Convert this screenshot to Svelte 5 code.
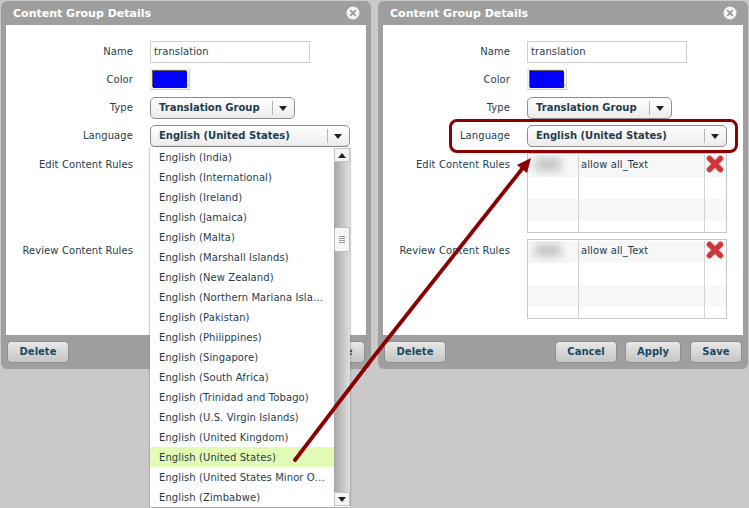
<script>
  const languages = [
    'English (India)', 'English (International)', 'English (Ireland)', 'English (Jamaica)',
    'English (Malta)', 'English (Marshall Islands)', 'English (New Zealand)',
    'English (Northern Mariana Islands)', 'English (Pakistan)', 'English (Philippines)',
    'English (Singapore)', 'English (South Africa)', 'English (Trinidad and Tobago)',
    'English (U.S. Virgin Islands)', 'English (United Kingdom)', 'English (United States)',
    'English (United States Minor Outlying Islands)', 'English (Zimbabwe)'
  ];
  const panels = [{ open: true }, { open: false }];
  const rules = ['Edit Content Rules', 'Review Content Rules'];
</script>

{#snippet closeIcon()}
  <svg class="close" width="14" height="14" viewBox="0 0 14 14">
    <circle cx="7" cy="7" r="6.5" fill="#f4f4f4" />
    <path d="M4.700 4.700l4.600 4.600M9.300 4.700l-4.600 4.600" stroke="#9c9c9c" stroke-width="1.800" stroke-linecap="round" />
  </svg>
{/snippet}

{#snippet select(label, cls)}
  <div class="select {cls}">
    <span class="select-label">{label}</span>
    <span class="select-arrow"><i class="tri"></i></span>
  </div>
{/snippet}

{#snippet ruleTable()}
  <div class="rule-table">
    {#each [0, 1, 2, 3] as i}
      <div class="rule-row" class:striped={i % 2 === 0} class:last={i === 3}>
        <div class="c1">
          {#if i === 0}<div class="blurred"></div>{/if}
        </div>
        <div class="c2">{i === 0 ? 'allow all_Text' : ''}</div>
        <div class="c3">
          {#if i === 0}
            <svg class="del" width="18" height="18" viewBox="0 0 18 18">
              <path d="M3.500 3.500L14.500 14.500M14.500 3.500L3.500 14.500" stroke="#c9b3b3" stroke-width="6.500" stroke-linecap="round" />
              <path d="M3.500 3.500L14.500 14.500M14.500 3.500L3.500 14.500" stroke="#d2343b" stroke-width="5" stroke-linecap="round" />
            </svg>
          {/if}
        </div>
      </div>
    {/each}
  </div>
{/snippet}

<div class="stage">
  {#each panels as panel}
    <section class="dialog">
      <header class="titlebar">
        <h2>Content Group Details</h2>
        {@render closeIcon()}
      </header>
      <div class="body">
        <div class="field first">
          <span class="label">Name</span>
          <input class="text" value="translation" readonly />
        </div>
        <div class="field colour">
          <span class="label">Color</span>
          <div class="swatch"><div class="blue"></div><i class="mini"></i></div>
        </div>
        <div class="field">
          <span class="label">Type</span>
          {@render select('Translation Group', 'type')}
        </div>
        <div class="field">
          <span class="label">Language</span>
          {@render select('English (United States)', 'lang')}
        </div>
        {#each rules as rule, r}
          <div class="field rule" class:second={r === 1}>
            <span class="label">{rule}</span>
            {#if !panel.open}{@render ruleTable()}{/if}
          </div>
        {/each}
      </div>
      <footer class="actions">
        <button>Delete</button>
        <span class="spacer"></span>
        <button class="cancel">Cancel</button>
        <button class="apply">Apply</button>
        <button class="save">Save</button>
      </footer>
    </section>
  {/each}

  <div class="dropdown">
    <ul>
      {#each languages as lang}
        <li class:active={lang === 'English (United States)'}>{lang}</li>
      {/each}
    </ul>
    <div class="scrollbar">
      <div class="sb-btn"><i class="tri up"></i></div>
      <div class="thumb"><i></i><i></i><i></i><i></i></div>
      <div class="sb-btn bottom"><i class="tri"></i></div>
    </div>
  </div>

  <div class="callout"></div>
  <svg class="pointer" width="749" height="508" viewBox="0 0 749 508">
    <path d="M295 460L375 355L522 169" stroke="#8b0000" stroke-width="3.800" stroke-linecap="round" stroke-linejoin="round" fill="none" />
    <path d="M531 158L527 173L517 165Z" fill="#8b0000" />
  </svg>
</div>

<style>
  :global(body) {
    margin: 0;
    background: #c9c9c9;
  }

  .stage {
    position: relative;
    width: 749px;
    height: 508px;
    overflow: hidden;
    display: flex;
    gap: 7px;
    padding: 1px 1px 0;
    box-sizing: border-box;
    font-family: "DejaVu Sans", Verdana, sans-serif;
    font-size: 10px;
    letter-spacing: .09px;
    color: #1f3d4d;
  }

  .dialog {
    width: 370px;
    height: 368px;
    background: #9f9f9f;
    border-radius: 6px;
    display: flex;
    flex-direction: column;
    box-sizing: border-box;
    padding: 0 5px;
  }

  .titlebar {
    height: 24px;
    flex: none;
    display: flex;
    align-items: center;
    justify-content: space-between;
    padding: 0 6px 0 7px;
  }

  h2 {
    margin: 0;
    font-size: 11px;
    font-weight: bold;
    letter-spacing: 0;
    color: #fff;
  }

  .close {
    display: block;
  }

  .body {
    background: #fff;
    height: 310px;
    flex: none;
    padding-top: 16px;
    box-sizing: border-box;
  }

  .field {
    display: flex;
    align-items: center;
    height: 22px;
    margin-bottom: 6px;
    line-height: 20px;
  }

  .field.colour {
    height: 21px;
    margin-bottom: 7px;
  }

  .field.colour .label {
    padding-top: 1px;
  }

  .label {
    width: 127px;
    flex: none;
    margin-right: 17px;
    text-align: right;
    white-space: nowrap;
  }

  .text {
    width: 160px;
    height: 22px;
    box-sizing: border-box;
    border: 1px solid #cfcfcf;
    padding: 0 0 2px 3px;
    font: inherit;
    letter-spacing: inherit;
    color: inherit;
    outline: none;
  }

  .swatch {
    position: relative;
    width: 40px;
    height: 21px;
    box-sizing: border-box;
    padding: 1px 2px 1px 2px;
    background: #f2f2f2;
    border: 1px solid #d0d0d0;
    border-top-color: #e8e8e8;
    border-left-color: #e8e8e8;
  }

  .blue {
    width: 34px;
    height: 17px;
    background: #0000ff;
    box-shadow: -1px -1px 0 #666;
  }

  .mini {
    position: absolute;
    right: 1px;
    bottom: 1px;
    border: 2px solid transparent;
    border-top: 3px solid #333;
    border-bottom: 0;
  }

  .select {
    height: 22px;
    box-sizing: border-box;
    border: 1px solid #8d8d8d;
    border-radius: 5px;
    background: linear-gradient(#fff, #ececec);
    display: flex;
    align-items: center;
    font-weight: bold;
    letter-spacing: 0;
  }

  .select.type {
    width: 145px;
  }

  .select.lang {
    width: 200px;
  }

  .select-label {
    flex: 1;
    padding: 0 0 0 8px;
    white-space: nowrap;
  }

  .select-arrow {
    width: 21px;
    height: 14px;
    flex: none;
    margin-right: 1px;
    display: flex;
    align-items: center;
    justify-content: center;
    border-left: 1px solid #b5b5b5;
    box-sizing: border-box;
  }

  .tri {
    display: block;
    border: 4px solid transparent;
    border-top: 5px solid #222;
    border-bottom: 0;
  }

  .tri.up {
    border-top: 0;
    border-bottom: 5px solid #222;
  }

  .field.rule {
    align-items: flex-start;
    height: 80px;
    margin-bottom: 6px;
  }

  .field.rule .label {
    line-height: 22px;
    padding-top: 1px;
  }

  .rule-table {
    width: 200px;
    height: 80px;
    box-sizing: border-box;
    border: 1px solid #c6c6c6;
    padding-top: 1px;
  }

  .rule-row {
    display: flex;
    height: 22px;
  }

  .rule-row.last {
    height: 12px;
  }

  .rule-row.striped {
    background: #f7f7f7;
  }

  .c1 {
    width: 50px;
    border-right: 1px solid #d2d2d2;
    position: relative;
    overflow: hidden;
  }

  .c2 {
    width: 126px;
    padding-left: 2px;
    box-sizing: border-box;
    border-right: 1px solid #d2d2d2;
    line-height: 20px;
    white-space: nowrap;
  }

  .c3 {
    flex: 1;
    display: flex;
    justify-content: center;
    padding-right: 1px;
  }

  .del {
    filter: blur(.3px);
  }

  .blurred {
    position: absolute;
    left: 7px;
    top: 3px;
    width: 26px;
    height: 13px;
    background: #c2c6c8;
    filter: blur(4px);
  }

  .actions {
    flex: 1;
    display: flex;
    align-items: flex-start;
    padding: 6px 0 0 1px;
    margin-right: -1px;
  }

  .spacer {
    flex: 1;
  }

  button {
    width: 62px;
    height: 22px;
    padding: 0 0 2px;
    border: 1px solid #8f8f8f;
    border-radius: 4px;
    background: linear-gradient(#e8e8e8, #c4c4c4);
    font: inherit;
    font-weight: bold;
    letter-spacing: 0;
    color: #1b4860;
  }

  .cancel {
    margin-right: 8px;
  }

  .apply {
    width: 56px;
    margin-right: 9px;
  }

  .save {
    width: 52px;
    margin-right: 2px;
  }

  .dropdown {
    position: absolute;
    left: 150px;
    top: 147px;
    width: 200px;
    height: 360px;
    display: flex;
    background: #fff;
    box-shadow: 0 0 2px #777;
  }

  ul {
    list-style: none;
    margin: 0;
    padding: 0;
    width: 184px;
    flex: none;
  }

  li {
    height: 20px;
    line-height: 21px;
    padding: 0 9px;
    box-sizing: border-box;
    white-space: nowrap;
    overflow: hidden;
    text-overflow: ellipsis;
  }

  li.active {
    background: #e2fbb5;
  }

  .scrollbar {
    position: relative;
    flex: 1;
    margin: 1px 0;
    background: linear-gradient(90deg, #a6a6a6, #e0e0e0);
    display: flex;
    flex-direction: column;
    justify-content: space-between;
  }

  .sb-btn {
    height: 14px;
    background: #f4f4f4;
    border: 1px solid #c4c4c4;
    box-sizing: border-box;
    display: flex;
    align-items: center;
    justify-content: center;
  }

  .thumb {
    position: absolute;
    top: 79px;
    left: 0;
    right: 0;
    height: 25px;
    box-sizing: border-box;
    background: #f6f6f6;
    border: 1px solid #bbb;
    border-radius: 2px;
    display: flex;
    flex-direction: column;
    align-items: center;
    justify-content: center;
    gap: 1px;
  }

  .thumb i {
    display: block;
    width: 6px;
    height: 1px;
    background: #999;
  }

  .callout {
    position: absolute;
    left: 449px;
    top: 119px;
    width: 289px;
    height: 34px;
    box-sizing: border-box;
    border: 3px solid #8b0000;
    border-radius: 8px;
  }

  .pointer {
    position: absolute;
    left: 0;
    top: 0;
    pointer-events: none;
  }
</style>
